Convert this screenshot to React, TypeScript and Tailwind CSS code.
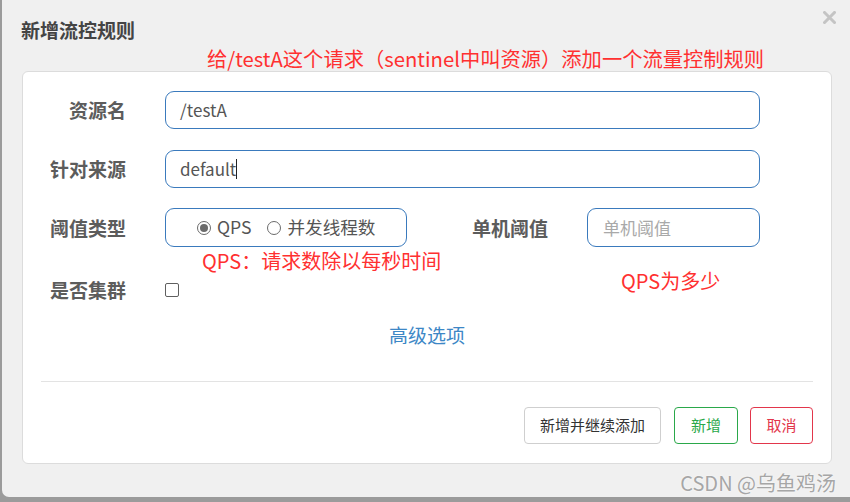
import React from "react";

const font = "font-['Noto_Sans_CJK_SC','Noto_Sans',sans-serif]";

const Label = ({ children, className = "" }: { children: React.ReactNode; className?: string }) => (
  <div className={`text-[19px] leading-[26px] font-bold text-[#5c5c5c] ${className}`}>{children}</div>
);

const Radio = ({ checked }: { checked?: boolean }) => (
  <span className="w-[14px] h-[14px] rounded-full border border-[#6b6b6b] bg-white flex items-center justify-center">
    {checked && <span className="w-[8px] h-[8px] rounded-full bg-[#6b6b6b]" />}
  </span>
);

export default function App() {
  return (
    <div className={`w-[850px] h-[502px] bg-[#9b9b9b] pl-[2px] pb-[5px] flex overflow-hidden ${font}`}>
      <div className="flex-1 bg-[#f0f0f0] rounded-bl-[7px] relative flex flex-col pl-[20px] pr-[18px]">
        {/* close */}
        <svg className="absolute right-[14px] top-[11px]" width="13" height="13" viewBox="0 0 13 13">
          <path d="M1.5 1.5 L11.5 11.5 M11.5 1.5 L1.5 11.5" stroke="#c4c4c4" strokeWidth="3" strokeLinecap="square" />
        </svg>

        <div className="pt-[17px] -ml-[1px] text-[19px] leading-[26px] font-bold text-[#444]">新增流控规则</div>
        <div className="mt-[3px] ml-[185px] text-[20.3px] leading-[24px] text-[#ff3030] whitespace-nowrap">
          给/testA这个请求（sentinel中叫资源）添加一个流量控制规则
        </div>

        {/* card */}
        <div className="mt-[1px] h-[393px] bg-white border border-[#dcdcdc] rounded-[6px] relative flex flex-col pt-[19px] pb-[19px]">
          <div className="flex items-center h-[38px]">
            <Label className="w-[103px] text-right">资源名</Label>
            <div className="ml-[39px] w-[595px] h-[38px] border border-[#3a7abd] rounded-[9px] flex items-center pl-[14px] text-[17px] text-[#555]">
              /testA
            </div>
          </div>

          <div className="flex items-center h-[38px] mt-[21px]">
            <Label className="w-[103px] text-right">针对来源</Label>
            <div className="ml-[39px] w-[595px] h-[38px] border border-[#3a7abd] rounded-[9px] flex items-center pl-[14px] text-[17px] text-[#555]">
              default<span className="w-[1px] h-[20px] bg-[#222]" />
            </div>
          </div>

          <div className="flex items-center h-[39px] mt-[20px]">
            <Label className="w-[103px] text-right">阈值类型</Label>
            <div className="ml-[39px] w-[242px] h-[39px] border border-[#3a7abd] rounded-[9px] flex items-center pl-[31px] text-[17.6px] text-[#555]">
              <Radio checked />
              <span className="ml-[6px]">QPS</span>
              <span className="ml-[16px]"><Radio /></span>
              <span className="ml-[6px]">并发线程数</span>
            </div>
            <Label className="ml-[65px] w-[77px]">单机阈值</Label>
            <div className="ml-[38px] w-[173px] h-[39px] border border-[#3a7abd] rounded-[9px] flex items-center pl-[15px] text-[17px] text-[#a9a9a9]">
              单机阈值
            </div>
          </div>

          <div className="flex items-center h-[26px] mt-[30px]">
            <Label className="w-[103px] text-right">是否集群</Label>
            <span className="ml-[39px] w-[14px] h-[14px] border border-[#5f5f5f] rounded-[2px] bg-white" />
          </div>

          <div className="mt-[19px] text-center text-[19px] leading-[26px] text-[#3d87c6]">高级选项</div>

          <div className="mt-[33px] mx-[18px] h-[2px] bg-[#e3e3e3]" />

          <div className="mt-[25px] mr-[18px] flex justify-end text-[15px]">
            <button className="w-[137px] h-[37px] border border-[#cfcfcf] rounded-[4px] text-[#333] bg-white">新增并继续添加</button>
            <button className="ml-[13px] w-[64px] h-[37px] border border-[#2aa84a] rounded-[4px] text-[#2aa84a] bg-white">新增</button>
            <button className="ml-[12px] w-[63px] h-[37px] border border-[#e2364b] rounded-[4px] text-[#e2364b] bg-white">取消</button>
          </div>

          {/* annotations drawn over the form */}
          <div className="absolute left-[179px] top-[177px] text-[20px] leading-[24px] text-[#ff3030] whitespace-nowrap">
            QPS：请求数除以每秒时间
          </div>
          <div className="absolute left-[598px] top-[197px] text-[20px] leading-[24px] text-[#ff3030] whitespace-nowrap">
            QPS为多少
          </div>
        </div>

        <div className="absolute right-[14px] bottom-[1px] text-[20px] leading-[26px] text-[#a6a6a6] [text-shadow:0_0_2px_#fff]">
          CSDN @乌鱼鸡汤
        </div>
      </div>
    </div>
  );
}
